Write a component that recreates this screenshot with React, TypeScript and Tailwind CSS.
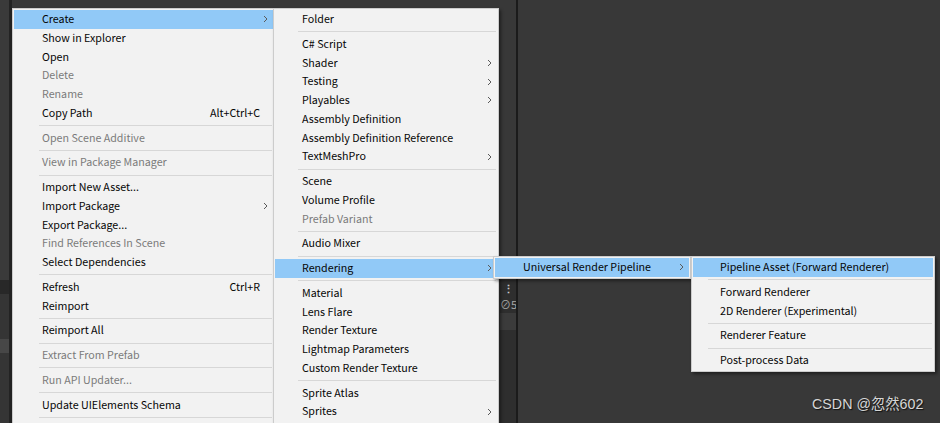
import type { ReactNode } from "react"

type Item =
  | { sep: true }
  | { spacer: true }
  | { label: string; shortcut?: string; arrow?: boolean; disabled?: boolean; active?: boolean }

const SEP: Item = { sep: true }
// menus run on past the bottom of the window
const MORE: Item = { spacer: true }

const mainItems: Item[] = [
  { label: "Create", arrow: true, active: true },
  { label: "Show in Explorer" },
  { label: "Open" },
  { label: "Delete", disabled: true },
  { label: "Rename", disabled: true },
  { label: "Copy Path", shortcut: "Alt+Ctrl+C" },
  SEP,
  { label: "Open Scene Additive", disabled: true },
  SEP,
  { label: "View in Package Manager", disabled: true },
  SEP,
  { label: "Import New Asset..." },
  { label: "Import Package", arrow: true },
  { label: "Export Package..." },
  { label: "Find References In Scene", disabled: true },
  { label: "Select Dependencies" },
  SEP,
  { label: "Refresh", shortcut: "Ctrl+R" },
  { label: "Reimport" },
  SEP,
  { label: "Reimport All" },
  SEP,
  { label: "Extract From Prefab", disabled: true },
  SEP,
  { label: "Run API Updater...", disabled: true },
  SEP,
  { label: "Update UIElements Schema" },
  SEP,
  MORE,
]

const createItems: Item[] = [
  { label: "Folder" },
  SEP,
  { label: "C# Script" },
  { label: "Shader", arrow: true },
  { label: "Testing", arrow: true },
  { label: "Playables", arrow: true },
  { label: "Assembly Definition" },
  { label: "Assembly Definition Reference" },
  { label: "TextMeshPro", arrow: true },
  SEP,
  { label: "Scene" },
  { label: "Volume Profile" },
  { label: "Prefab Variant", disabled: true },
  SEP,
  { label: "Audio Mixer" },
  SEP,
  { label: "Rendering", arrow: true, active: true },
  SEP,
  { label: "Material" },
  { label: "Lens Flare" },
  { label: "Render Texture" },
  { label: "Lightmap Parameters" },
  { label: "Custom Render Texture" },
  SEP,
  { label: "Sprite Atlas" },
  { label: "Sprites", arrow: true },
  MORE,
]

const renderingItems: Item[] = [
  { label: "Universal Render Pipeline", arrow: true, active: true },
]

const urpItems: Item[] = [
  { label: "Pipeline Asset (Forward Renderer)", active: true },
  SEP,
  { label: "Forward Renderer" },
  { label: "2D Renderer (Experimental)" },
  SEP,
  { label: "Renderer Feature" },
  SEP,
  { label: "Post-process Data" },
]

function Chevron() {
  return (
    <svg width="5" height="8" viewBox="0 0 5 8" className="shrink-0">
      <polyline points="1,1 4,4 1,7" fill="none" stroke="#5a5a5a" strokeWidth="1" />
    </svg>
  )
}

function Menu({ items, className, pad = 28, sepInset = 25 }: { items: Item[]; className: string; pad?: number; sepInset?: number }) {
  return (
    <div className={`absolute bg-[#f2f2f2] border border-[#cccccc] p-px shadow-[2px_2px_3px_rgba(0,0,0,0.45)] ${className}`}>
      {items.map((it, i) => {
        if ("spacer" in it) return <div key={i} className="h-[24px]" />
        if ("sep" in it) {
          return (
            <div key={i} className="h-[6px] flex items-center pr-px" style={{ paddingLeft: sepInset }}>
              <div className="h-px w-full bg-[#d7d7d7]" />
            </div>
          )
        }
        return (
          <div
            key={i}
            className={`h-[18.75px] flex items-center pr-[5px] text-[10.7px] leading-none whitespace-nowrap ${
              it.active ? "bg-[#91c9f7]" : ""
            } ${it.disabled ? "text-[#7a7a7a]" : "text-[#050505]"}`}
            style={{ paddingLeft: pad }}
          >
            <span className="flex-1">{it.label}</span>
            {it.shortcut && <span className="mr-[8px]">{it.shortcut}</span>}
            {it.arrow && <Chevron />}
          </div>
        )
      })}
    </div>
  )
}

function Column({ className, children }: { className: string; children?: ReactNode }) {
  return <div className={className}>{children}</div>
}

export default function App() {
  return (
    <div
      className="relative w-[940px] h-[423px] overflow-hidden bg-[#383838]"
      style={{ fontFamily: '"Noto Sans CJK SC", "Noto Sans", sans-serif' }}
    >
      {/* editor panels behind the menus */}
      <div className="flex h-full">
        <Column className="w-[9px] flex flex-col bg-[#353535]">
          <div className="h-[280px] bg-[#3a3a3a]" />
          <div className="h-[14px] bg-[#282828]" />
          <div className="h-[45px]" />
          <div className="h-[14px] bg-[#474747]" />
        </Column>
        <Column className="w-[3px] bg-[#232323]" />
        <Column className="w-[488px] bg-[#383838]" />
        <Column className="w-[16px] flex flex-col bg-[#383838]">
          <div className="h-[280px]" />
          <div className="flex-1 flex flex-col bg-[#2e2e2e]">
            <div className="h-[16px] flex items-center justify-center text-[#c8c8c8] text-[11px] font-bold leading-none">⋮</div>
            <div className="h-[17px] flex items-center text-[#a8a8a8] text-[11px] leading-none">⊘5</div>
            <div className="h-[17px] bg-[#3b3b3b]" />
          </div>
        </Column>
        <Column className="w-[2px] bg-[#1b1b1b]" />
        <Column className="flex-1 bg-[#383838]" />
      </div>

      <Menu items={mainItems} className="left-[12px] top-[8px] w-[263px]" pad={28} sepInset={25} />
      <Menu items={createItems} className="left-[273px] top-[8px] w-[226px]" pad={27} sepInset={23} />
      <Menu items={renderingItems} className="left-[493px] top-[256px] w-[198px]" pad={28} />
      <Menu items={urpItems} className="left-[691px] top-[256px] w-[244px]" pad={27} sepInset={15} />

      <div
        className="absolute left-[812px] top-[397px] text-[14.3px] leading-none text-[#d6d6d6] [text-shadow:1px_1px_1px_#111]"
        style={{ fontFamily: '"Liberation Sans", "Noto Sans CJK SC", sans-serif' }}
      >
        CSDN @忽然602
      </div>
    </div>
  )
}
